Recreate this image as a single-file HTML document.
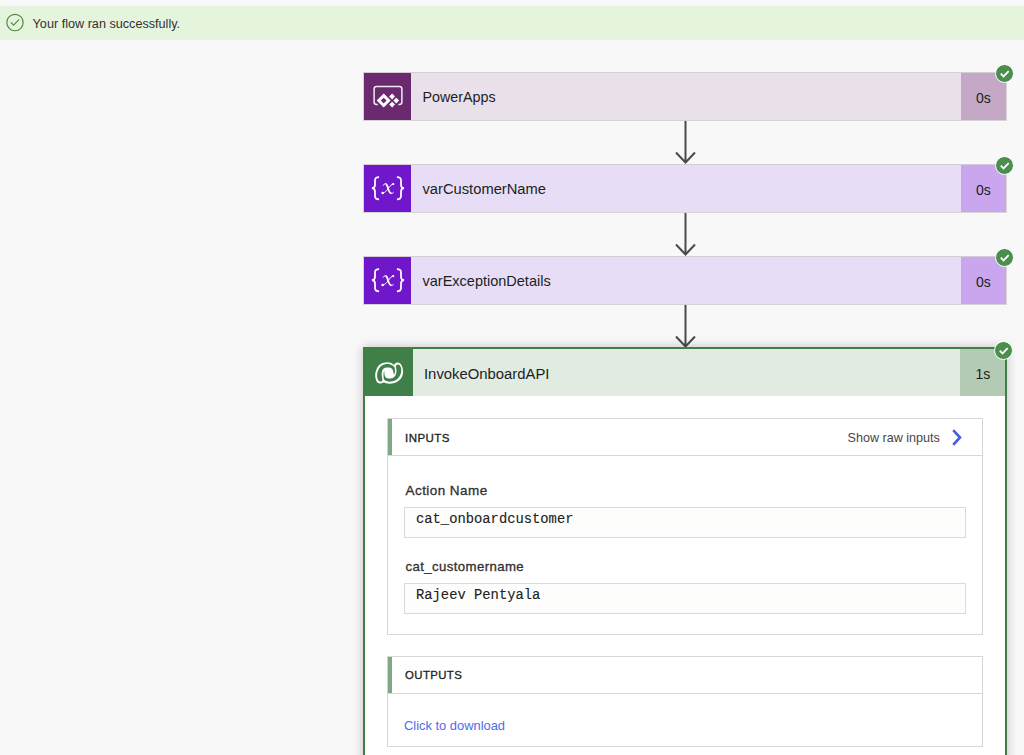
<!DOCTYPE html>
<html><head><meta charset="utf-8">
<style>
html,body{margin:0;padding:0;}
body{width:1024px;height:755px;overflow:hidden;background:#f8f8f8;position:relative;font-family:"Liberation Sans",sans-serif;color:#201f1e;}
.abs{position:absolute;}
.t{position:absolute;white-space:nowrap;line-height:1;}
.sb{-webkit-text-stroke:0.32px currentColor;}
.banner{left:0;top:6px;width:1024px;height:34px;background:#e5f4dd;}
.card{position:absolute;left:363px;width:642px;height:47px;border:1px solid #d5d5d4;}
.ic{position:absolute;left:0;top:0;width:47px;height:47px;overflow:hidden;}
.dur{position:absolute;right:0;top:0;width:45px;height:47px;}
.badge{position:absolute;width:17px;height:17px;border-radius:50%;background:#4a8f4e;border:1px solid #fff;}
.badge svg{position:absolute;left:0;top:0;}
.arrow{position:absolute;left:674.5px;width:21px;}
.mono{font-family:"Liberation Mono",monospace;-webkit-text-stroke:0.12px currentColor;}
.box{position:absolute;left:387px;width:594px;border:1px solid #d6d6d6;background:#fff;}
.field{position:absolute;left:404px;width:560px;height:29px;border:1px solid #dadada;background:#fdfdfc;}
</style></head><body>

<div class="abs banner"></div>
<svg class="abs" style="left:5px;top:12px" width="20" height="21" viewBox="0 0 20 21">
  <circle cx="10" cy="10.5" r="8.2" fill="none" stroke="#4e8a3c" stroke-width="1.15"/>
  <path d="M5.9 10.4 L8.6 13.1 L14.2 7.4" fill="none" stroke="#4e8a3c" stroke-width="1.15"/>
</svg>
<div class="t" style="left:32.6px;top:17.8px;font-size:12.65px;color:#323130">Your flow ran successfully.</div>

<!-- card 1 -->
<div class="card" style="top:72px;background:#eae0ea;border-top-color:#d5cfd5">
  <div class="ic" style="background:#6b2a70">
    <svg width="48" height="47" viewBox="0 0 48 47">
      <path d="M13.8 31.6 H12.6 Q10.1 31.6 10.1 29.1 V15.9 Q10.1 13.4 12.6 13.4 H35.4 Q37.9 13.4 37.9 15.9 V29.1 Q37.9 31.6 35.4 31.6 H34.4" fill="none" stroke="#fff" stroke-opacity="0.9" stroke-width="1.5"/>
      <path d="M19.7 20.55 L26.7 27.55 L19.7 34.55 L12.7 27.55 Z M19.7 24.65 L16.8 27.55 L19.7 30.45 L22.6 27.55 Z" fill="#fff" fill-rule="evenodd"/>
      <path d="M28.1 20.6 L31 23.5 L28.1 26.4 L25.2 23.5 Z M32.2 24.65 L35.1 27.55 L32.2 30.45 L29.3 27.55 Z M28.1 28.7 L31 31.6 L28.1 34.5 L25.2 31.6 Z" fill="#fff"/>
    </svg>
  </div>
  <div class="dur" style="background:#c4a8c5"></div>
</div>
<div class="t" style="left:422.5px;top:90.3px;font-size:14.3px">PowerApps</div>
<div class="t" style="left:976px;top:90.5px;font-size:14px">0s</div>
<div class="badge" style="left:995px;top:64px"><svg width="17" height="17" viewBox="0 0 17 17"><path d="M4.8 8.7 L7.5 11.4 L12.7 6.2" fill="none" stroke="#fff" stroke-width="1.8"/></svg></div>

<!-- card 2 -->
<div class="card" style="top:164px;background:#e8ddf6;border-top-color:#d3cdd8">
  <div class="ic" style="background:#7017cc">
    <svg width="48" height="47" viewBox="0 0 48 47">
      <path d="M15.1 12.2 Q11 12.2 11 15.5 V19.8 Q11 23.2 7.9 23.2 Q11 23.2 11 26.6 V31 Q11 34.3 15.1 34.3" fill="none" stroke="#fff" stroke-width="1.75"/>
      <path d="M32.9 12.2 Q37 12.2 37 15.5 V19.8 Q37 23.2 40.1 23.2 Q37 23.2 37 26.6 V31 Q37 34.3 32.9 34.3" fill="none" stroke="#fff" stroke-width="1.75"/>
      <path d="M19.1 20.6 Q20.2 18.6 21.5 18.6 Q22.9 18.8 23.9 23 Q25.2 28.4 27.4 28.5 Q28.8 28.5 29.6 27.3" fill="none" stroke="#fff" stroke-width="1"/><path d="M21.6 18.8 Q23 19.2 24 23.1 Q25.1 27.6 27.4 28.4" fill="none" stroke="#fff" stroke-width="1.8"/>
      <path d="M18.4 28.1 Q20.6 27.9 22.4 25.9 L27 20.1 Q28 19.2 29.3 19.1" fill="none" stroke="#fff" stroke-width="0.95"/><circle cx="18.6" cy="28" r="1.25" fill="#fff"/><circle cx="29.2" cy="19.1" r="1.15" fill="#fff"/>
    </svg>
  </div>
  <div class="dur" style="background:#c9a6ee"></div>
</div>
<div class="t" style="left:422.5px;top:181.9px;font-size:14.72px">varCustomerName</div>
<div class="t" style="left:976px;top:182.5px;font-size:14px">0s</div>
<div class="badge" style="left:995px;top:156px"><svg width="17" height="17" viewBox="0 0 17 17"><path d="M4.8 8.7 L7.5 11.4 L12.7 6.2" fill="none" stroke="#fff" stroke-width="1.8"/></svg></div>

<!-- card 3 -->
<div class="card" style="top:256px;background:#e8ddf6;border-top-color:#d3cdd8">
  <div class="ic" style="background:#7017cc">
    <svg width="48" height="47" viewBox="0 0 48 47">
      <path d="M15.1 12.2 Q11 12.2 11 15.5 V19.8 Q11 23.2 7.9 23.2 Q11 23.2 11 26.6 V31 Q11 34.3 15.1 34.3" fill="none" stroke="#fff" stroke-width="1.75"/>
      <path d="M32.9 12.2 Q37 12.2 37 15.5 V19.8 Q37 23.2 40.1 23.2 Q37 23.2 37 26.6 V31 Q37 34.3 32.9 34.3" fill="none" stroke="#fff" stroke-width="1.75"/>
      <path d="M19.1 20.6 Q20.2 18.6 21.5 18.6 Q22.9 18.8 23.9 23 Q25.2 28.4 27.4 28.5 Q28.8 28.5 29.6 27.3" fill="none" stroke="#fff" stroke-width="1"/><path d="M21.6 18.8 Q23 19.2 24 23.1 Q25.1 27.6 27.4 28.4" fill="none" stroke="#fff" stroke-width="1.8"/>
      <path d="M18.4 28.1 Q20.6 27.9 22.4 25.9 L27 20.1 Q28 19.2 29.3 19.1" fill="none" stroke="#fff" stroke-width="0.95"/><circle cx="18.6" cy="28" r="1.25" fill="#fff"/><circle cx="29.2" cy="19.1" r="1.15" fill="#fff"/>
    </svg>
  </div>
  <div class="dur" style="background:#c9a6ee"></div>
</div>
<div class="t" style="left:422.5px;top:273.9px;font-size:14.5px">varExceptionDetails</div>
<div class="t" style="left:976px;top:274.5px;font-size:14px">0s</div>
<div class="badge" style="left:995px;top:248px"><svg width="17" height="17" viewBox="0 0 17 17"><path d="M4.8 8.7 L7.5 11.4 L12.7 6.2" fill="none" stroke="#fff" stroke-width="1.8"/></svg></div>

<!-- arrows -->
<svg class="arrow" style="top:121px" width="21" height="43" viewBox="0 0 21 43"><path d="M10.5 0 V41.5 M1 31.5 L10.5 41.5 L20 31.5" fill="none" stroke="#4a4a4a" stroke-width="2"/></svg>
<svg class="arrow" style="top:213px" width="21" height="43" viewBox="0 0 21 43"><path d="M10.5 0 V41.5 M1 31.5 L10.5 41.5 L20 31.5" fill="none" stroke="#4a4a4a" stroke-width="2"/></svg>
<svg class="arrow" style="top:305px" width="21" height="43" viewBox="0 0 21 43"><path d="M10.5 0 V41.5 M1 31.5 L10.5 41.5 L20 31.5" fill="none" stroke="#4a4a4a" stroke-width="2"/></svg>

<!-- card 4 -->
<div class="abs" style="left:363px;top:347px;width:640px;height:420px;border:2px solid #3f7f46;background:#fff;box-shadow:0 0 10px rgba(0,0,0,.22)">
  <div class="abs" style="left:0;top:0;width:640px;height:47px;background:#e1ebe2"></div>
  <div class="abs" style="left:0;top:0;width:48px;height:47px;background:#417f48">
    <svg width="48" height="47" viewBox="0 0 48 47">
      <path d="M10.20 25.60 C10.35 23.23 11.45 20.03 12.50 18.20 C13.55 16.37 14.95 15.42 16.50 14.60 C18.05 13.78 20.18 13.40 21.80 13.30 C23.42 13.20 25.02 13.62 26.20 14.00 C27.38 14.38 28.17 15.60 28.90 15.60 C29.63 15.60 29.92 14.35 30.60 14.00 C31.28 13.65 32.05 13.20 33.00 13.50 C33.95 13.80 35.45 14.35 36.30 15.80 C37.15 17.25 38.07 20.03 38.10 22.20 C38.13 24.37 37.60 26.97 36.50 28.80 C35.40 30.63 33.33 32.22 31.50 33.20 C29.67 34.18 27.25 34.53 25.50 34.70 C23.75 34.87 22.15 34.42 21.00 34.20 C19.85 33.98 19.57 33.35 18.60 33.40 C17.63 33.45 16.37 34.67 15.20 34.50 C14.03 34.33 12.43 33.88 11.60 32.40 C10.77 30.92 10.05 27.97 10.20 25.60Z" fill="#fff"/>
      <path d="M17.30 31.80 C17.02 32.32 16.18 32.70 15.50 32.60 C14.82 32.50 13.77 32.13 13.20 31.20 C12.63 30.27 12.18 28.43 12.10 27.00 C12.02 25.57 12.23 24.07 12.70 22.60 C13.17 21.13 13.93 19.35 14.90 18.20 C15.87 17.05 17.38 16.22 18.50 15.70 C19.62 15.18 20.48 15.15 21.60 15.10 C22.72 15.05 24.13 15.13 25.20 15.40 C26.27 15.67 27.28 16.17 28.00 16.70 C28.72 17.23 29.17 17.80 29.50 18.60 C29.83 19.40 29.98 20.55 30.00 21.50 C30.02 22.45 29.77 23.58 29.60 24.30 C29.43 25.02 29.22 26.05 29.00 25.80 C28.78 25.55 28.60 23.77 28.30 22.80 C28.00 21.83 27.72 20.68 27.20 20.00 C26.68 19.32 26.13 18.95 25.20 18.70 C24.27 18.45 22.68 18.35 21.60 18.50 C20.52 18.65 19.47 18.92 18.70 19.60 C17.93 20.28 17.33 21.53 17.00 22.60 C16.67 23.67 16.67 24.85 16.70 26.00 C16.73 27.15 17.10 28.53 17.20 29.50 C17.30 30.47 17.58 31.28 17.30 31.80Z" fill="#417f48"/>
      <path d="M33.00 15.60 C33.62 15.73 34.65 16.08 35.20 17.00 C35.75 17.92 36.25 19.68 36.30 21.10 C36.35 22.52 36.05 24.13 35.50 25.50 C34.95 26.87 34.00 28.27 33.00 29.30 C32.00 30.33 30.75 31.15 29.50 31.70 C28.25 32.25 26.75 32.50 25.50 32.60 C24.25 32.70 22.95 32.52 22.00 32.30 C21.05 32.08 20.33 31.75 19.80 31.30 C19.27 30.85 19.02 30.40 18.80 29.60 C18.58 28.80 18.52 27.52 18.50 26.50 C18.48 25.48 18.58 24.30 18.70 23.50 C18.82 22.70 19.08 21.62 19.20 21.70 C19.32 21.78 19.30 23.15 19.40 24.00 C19.50 24.85 19.45 25.98 19.80 26.80 C20.15 27.62 20.55 28.45 21.50 28.90 C22.45 29.35 24.33 29.58 25.50 29.50 C26.67 29.42 27.65 28.95 28.50 28.40 C29.35 27.85 30.12 27.10 30.60 26.20 C31.08 25.30 31.28 24.07 31.40 23.00 C31.52 21.93 31.40 20.70 31.30 19.80 C31.20 18.90 30.77 18.20 30.80 17.60 C30.83 17.00 31.13 16.53 31.50 16.20 C31.87 15.87 32.38 15.47 33.00 15.60Z" fill="#417f48"/>
    </svg>
  </div>
  <div class="abs" style="right:0;top:0;width:45px;height:47px;background:#b3cbb4"></div>
</div>
<div class="t" style="left:424px;top:367.4px;font-size:14.85px">InvokeOnboardAPI</div>
<div class="t" style="left:975.5px;top:367px;font-size:14px">1s</div>
<div class="badge" style="left:994px;top:341px"><svg width="17" height="17" viewBox="0 0 17 17"><path d="M4.8 8.7 L7.5 11.4 L12.7 6.2" fill="none" stroke="#fff" stroke-width="1.8"/></svg></div>

<!-- inputs box -->
<div class="box" style="top:418px;height:215px"></div>
<div class="abs" style="left:388px;top:419px;width:4px;height:36px;background:#7fa886"></div>
<div class="abs" style="left:388px;top:455px;width:594px;height:1px;background:#d6d6d6"></div>
<div class="t sb" style="left:405px;top:432.8px;font-size:11.5px;letter-spacing:0.44px">INPUTS</div>
<div class="t" style="left:847.5px;top:432px;font-size:12.6px;color:#484644">Show raw inputs</div>
<svg class="abs" style="left:950px;top:428px" width="14" height="19" viewBox="0 0 14 19"><path d="M3.2 2.2 L10 9.5 L3.2 16.8" fill="none" stroke="#3f5fdc" stroke-width="2.6"/></svg>

<div class="t sb" style="left:405.5px;top:484.4px;font-size:13.5px;letter-spacing:0.44px;color:#323130">Action Name</div>
<div class="field" style="top:507px"></div>
<div class="t mono" style="left:416px;top:513.2px;font-size:13.82px;color:#222">cat_onboardcustomer</div>

<div class="t sb" style="left:405.5px;top:560.4px;font-size:13.2px;letter-spacing:0.4px;color:#323130">cat_customername</div>
<div class="field" style="top:583px"></div>
<div class="t mono" style="left:416px;top:589px;font-size:13.82px;color:#222">Rajeev Pentyala</div>

<!-- outputs box -->
<div class="box" style="top:656px;height:89px"></div>
<div class="abs" style="left:388px;top:657px;width:4px;height:36px;background:#7fa886"></div>
<div class="abs" style="left:388px;top:693px;width:594px;height:1px;background:#d6d6d6"></div>
<div class="t sb" style="left:405px;top:670.2px;font-size:11.4px;letter-spacing:0.4px">OUTPUTS</div>
<div class="t" style="left:404px;top:720.3px;font-size:12.9px;color:#4f6bed">Click to download</div>

</body></html>
